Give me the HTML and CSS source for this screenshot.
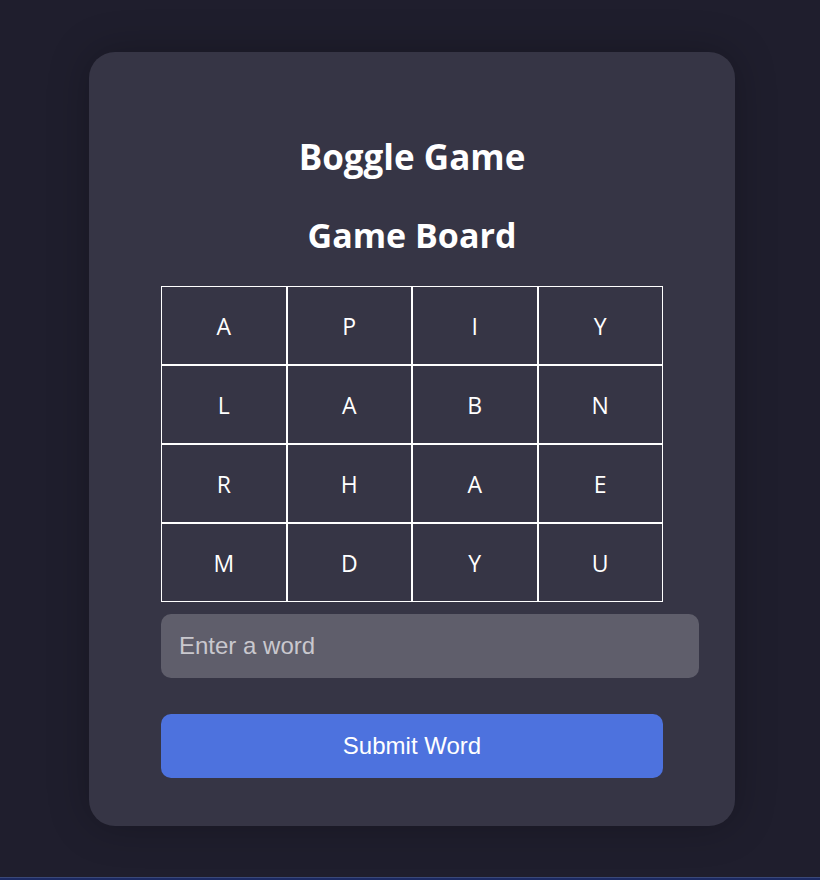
FILE: index.html
```html
<!DOCTYPE html>
<html lang="en">
<head>
<meta charset="utf-8">
<title>Boggle Game</title>
<link rel="stylesheet" href="styles.css">
</head>
<body>
<main class="page">
  <section class="card">
    <h1 class="title">Boggle Game</h1>
    <h2 class="subtitle">Game Board</h2>
    <div class="board">
      <div class="cell">A</div><div class="cell">P</div><div class="cell">I</div><div class="cell">Y</div>
      <div class="cell">L</div><div class="cell">A</div><div class="cell">B</div><div class="cell">N</div>
      <div class="cell">R</div><div class="cell">H</div><div class="cell">A</div><div class="cell">E</div>
      <div class="cell">M</div><div class="cell">D</div><div class="cell">Y</div><div class="cell">U</div>
    </div>
    <input class="word-input" type="text" placeholder="Enter a word">
    <button class="submit" type="button">Submit Word</button>
  </section>
</main>
<div class="bottom-bar"></div>
</body>
</html>
```
FILE: styles.css
```css
html, body {
  margin: 0;
  padding: 0;
  background: #1f1e2d;
  height: 100%;
  overflow: hidden;
}
body {
  position: relative;
}
.page {
  display: flex;
  justify-content: center;
  padding: 52px 0 0 4px;
}
.card {
  width: 502px;
  padding: 85px 72px 48px;
  background: #363545;
  border-radius: 26px;
  box-shadow: 0 0 40px rgba(0, 0, 0, 0.25);
  display: flex;
  flex-direction: column;
  align-items: center;
  font-family: "Open Sans", "Noto Sans", sans-serif;
  color: #ffffff;
}
.title {
  margin: 0;
  font-size: 35px;
  line-height: 40px;
  font-weight: 700;
}
.subtitle {
  margin: 38px 0 31px;
  font-size: 34px;
  line-height: 40px;
  font-weight: 700;
}
.board {
  width: 502px;
  display: grid;
  grid-template-columns: repeat(4, 1fr);
}
.cell {
  height: 77px;
  border: 1px solid #ffffff;
  display: flex;
  align-items: center;
  justify-content: center;
  font-size: 23px;
  font-weight: 400;
}
.word-input {
  align-self: flex-start;
  box-sizing: content-box;
  width: 100%;
  height: 28px;
  margin: 12px 0 0;
  padding: 18px;
  border: none;
  outline: none;
  border-radius: 10px;
  background: #5f5e6b;
  color: #ffffff;
  font-family: "Liberation Sans", Arial, sans-serif;
  font-size: 24px;
}
.word-input::placeholder {
  color: #c9c8ce;
}
.submit {
  width: 100%;
  height: 64px;
  margin-top: 36px;
  border: none;
  border-radius: 10px;
  background: #4d72de;
  color: #ffffff;
  font-family: "Liberation Sans", Arial, sans-serif;
  font-size: 24px;
}
.bottom-bar {
  position: absolute;
  left: 0;
  right: 0;
  bottom: 0;
  height: 2px;
  border-top: 1px solid #3a4878;
  background: #1c2a62;
}
```
